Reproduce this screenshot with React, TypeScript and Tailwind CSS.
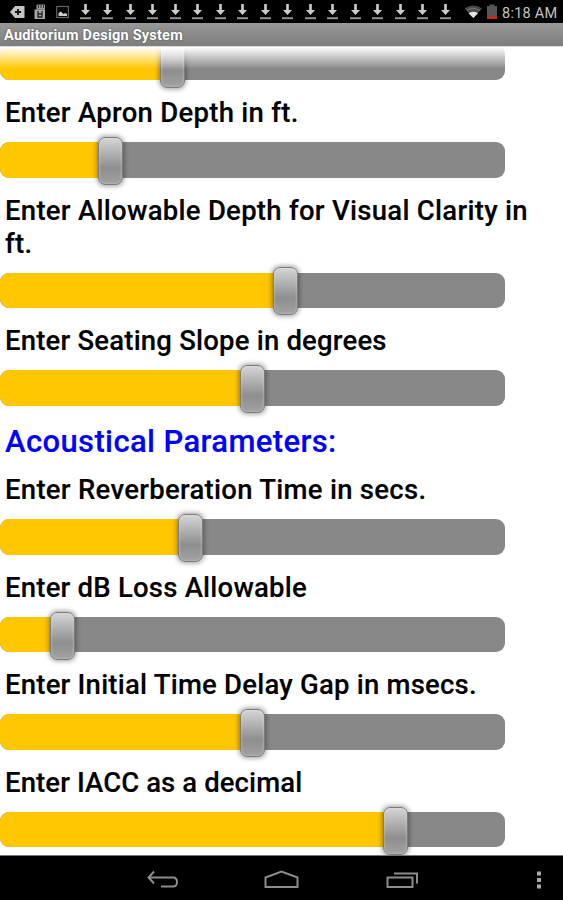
import React from 'react';

const Slider = ({ value }: { value: number }) => {
  return (
    <div className="relative h-12 w-[505px] shrink-0 pt-[5.5px]">
      <div className="h-[35.5px] w-full overflow-hidden rounded-[9px] bg-[#888888]">
        <div className="h-full bg-[#fec700]" style={{ width: value }}></div>
      </div>
      <div
        className="absolute top-[0.4px] h-12 w-[25px] rounded-[7px] border-[1.5px] border-[#7c7c7c] bg-linear-to-b from-[#d6d6d6] via-[#8e8e8e] via-65% to-[#a2a2a2] shadow-[0_0_5px_1px_rgba(0,0,0,0.4),inset_0_0_2px_1px_rgba(225,225,225,0.3)]"
        style={{ left: value - 12.5 }}
      ></div>
    </div>
  );
};

const Label = ({ children, tracking = 'tracking-[0.28px]' }: any) => {
  return (
    <div className={`shrink-0 whitespace-nowrap pb-[6.6px] pl-[5px] pt-[10.2px] text-[27.5px] font-medium leading-[32.8px] text-black [-webkit-text-stroke:0.15px_black] ${tracking}`}>
      {children}
    </div>
  );
};

const DownloadIcon = () => (
  <svg className="h-[18px] w-[22.5px] shrink-0" viewBox="0 0 22.5 18">
    <path d="M10.2 1h2.6v6h3.2l-4.5 5-4.5-5h3.2z" fill="#cccccc" />
    <path d="M6 15.2h11" stroke="#909090" strokeWidth="2" />
  </svg>
);

const StatusBar = () => {
  return (
    <div className="flex h-[23px] shrink-0 items-center bg-black">
      <svg className="h-[23px] w-[73.5px] shrink-0" viewBox="0 0 73.5 23">
        <path d="M10 12l5-6h9.5v12H15z" fill="#c4c4c4" />
        <path d="M15 12h6M18 9v6" stroke="#111" strokeWidth="1.8" />
        <path d="M37.5 4.5h7.5v5h-8.5v-4z" fill="#999" />
        <path d="M38.5 5v3M41 5v3M43.5 5v3" stroke="#333" strokeWidth="1" />
        <path d="M34.5 9.5h10.5V19H34.5z" fill="#aaa" />
        <path d="M38 11v6h4v-6M38 14h4" fill="none" stroke="#222" strokeWidth="1.3" />
        <rect x="56.7" y="6.5" width="11.6" height="11" fill="none" stroke="#666" strokeWidth="1.2" />
        <path d="M58.5 16v-3l2.5-1.5 2.5 2.5 1.5-1 2 1V16z" fill="#ccc" />
      </svg>
      <div className="flex h-[17px] w-[382.5px] shrink-0">
        {Array.from({ length: 17 }, (_, i) => (
          <DownloadIcon key={i} />
        ))}
      </div>
      <svg className="h-[23px] w-[45px] shrink-0" viewBox="0 0 45 23">
        <path d="M8.5 8.5Q17 2.5 26 8.5L17.3 18z" fill="#4a4a4a" />
        <path d="M12.5 13.2Q17.3 10.5 22 13.2L17.3 18z" fill="#e4e4e4" />
        <path d="M11 10.5Q17.3 6.5 23.5 10.5" fill="none" stroke="#777" />
        <path d="M33.5 4.5h5V6h2.5v13H31V6h2.5z" fill="#555" />
        <path d="M31 16h10v3H31z" fill="#b83222" />
      </svg>
      <span className="ml-[1px] mt-[4px] whitespace-nowrap text-[14.5px] leading-[20px] tracking-[0.25px] text-[#c4c4c4]">8:18 AM</span>
    </div>
  );
};

const NavBar = () => {
  return (
    <div className="h-[45px] shrink-0 border-t border-[#777777] bg-black">
      <svg className="h-[44px] w-[563px]" viewBox="0 855.5 563 44" fill="none" stroke="#8c8c8c" strokeWidth="2">
        <path d="M154 871l-5.5 6 5.5 6M149 877h24q4 0 4 4.5t-4 4.5h-12" />
        <path d="M265.5 886.5v-9.5l16-6 16 6v9.5z" />
        <path d="M387.5 877h25v9.5h-25zM394 873h23v10" />
        <path d="M537 871h4v4h-4zM537 877.5h4v4h-4zM537 884h4v4h-4z" fill="#aaa" stroke="none" />
      </svg>
    </div>
  );
};

export default function App() {
  return (
    <div className="flex h-[900px] w-[563px] flex-col overflow-hidden bg-white font-['Roboto',sans-serif]">
      <StatusBar />
      <div className="h-[24px] shrink-0 whitespace-nowrap border-b border-[#dddddd] bg-linear-to-b from-[#989898] to-[#7d7d7d] pl-[4px] text-[14.5px] font-bold leading-[26px] tracking-[0.22px] text-white [text-shadow:0_0_2px_#444]">
        Auditorium Design System
      </div>
      <div className="relative flex min-h-0 flex-1 flex-col overflow-hidden">
        <div className="-mt-[7.9px] flex flex-col">
          <Slider value={172} />
          <Label>Enter Apron Depth in ft.</Label>
          <Slider value={110} />
          <Label>
            Enter Allowable Depth for Visual Clarity in
            <br />
            ft.
          </Label>
          <Slider value={285.5} />
          <Label tracking="tracking-[0.2px]">Enter Seating Slope in degrees</Label>
          <Slider value={252.5} />
          <div className="h-[51.4px] shrink-0 pl-[5px] pt-[10px] text-[31px] font-medium leading-[37px] tracking-[0.38px] text-[#0000ff] [-webkit-text-stroke:0.15px_#0000ff]">
            Acoustical Parameters:
          </div>
          <Label>Enter Reverberation Time in secs.</Label>
          <Slider value={190} />
          <Label tracking="tracking-[0.22px]">Enter dB Loss Allowable</Label>
          <Slider value={62.5} />
          <Label tracking="tracking-[0.22px]">Enter Initial Time Delay Gap in msecs.</Label>
          <Slider value={252.5} />
          <Label tracking="tracking-[0.1px]">Enter IACC as a decimal</Label>
          <Slider value={395} />
        </div>
        <div className="absolute inset-x-0 top-0 h-[22px] bg-linear-to-b from-white to-transparent"></div>
      </div>
      <NavBar />
    </div>
  );
}
